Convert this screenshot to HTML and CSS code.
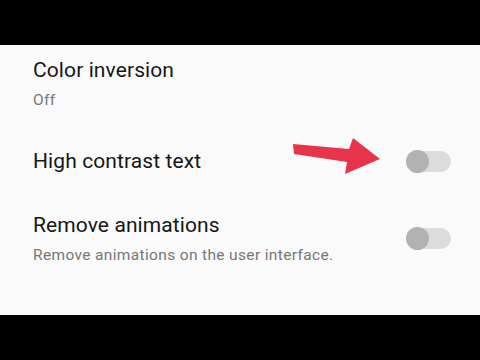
FILE: index.html
```
<!DOCTYPE html>
<html>
<head>
<meta charset="utf-8">
<link rel="stylesheet" href="styles.css">
</head>
<body>
<div class="frame">
  <div class="bar"></div>
  <div class="content">
    <div class="row">
      <div class="text">
        <div class="title">Color inversion</div>
        <div class="sub">Off</div>
      </div>
    </div>
    <div class="row">
      <div class="text">
        <div class="title">High contrast text</div>
      </div>
      <div class="toggle"><span class="knob"></span></div>
    </div>
    <div class="row">
      <div class="text">
        <div class="title">Remove animations</div>
        <div class="sub">Remove animations on the user interface.</div>
      </div>
      <div class="toggle"><span class="knob"></span></div>
    </div>
    <svg class="arrow" width="480" height="270" viewBox="0 45 480 270">
      <polygon points="293,144 349,149 353,138 380,159 345,174 347,162 294,154" fill="#e8344a"/>
    </svg>
  </div>
  <div class="bar"></div>
</div>
</body>
</html>
```
FILE: styles.css
```
html, body {
  margin: 0;
  padding: 0;
  background: #000;
}
.frame {
  width: 480px;
  height: 360px;
  display: flex;
  flex-direction: column;
  font-family: Roboto, "Liberation Sans", sans-serif;
}
.bar {
  height: 45px;
  background: #000;
  flex: none;
}
.content {
  position: relative;
  height: 270px;
  background: #fafafa;
  padding: 11px 29px 0 33px;
  box-sizing: border-box;
  display: flex;
  flex-direction: column;
  gap: 36px;
}
.row {
  display: flex;
  align-items: center;
  justify-content: space-between;
}
.text {
  display: flex;
  flex-direction: column;
  gap: 5px;
}
.title {
  font-size: 21px;
  line-height: 28px;
  letter-spacing: 0.1px;
  color: #161616;
}
.sub {
  font-size: 15.5px;
  line-height: 22px;
  letter-spacing: 0.35px;
  color: #777777;
}
.toggle {
  position: relative;
  width: 39px;
  height: 21px;
  margin-left: 6px;
  border-radius: 11px;
  background: #dcdcdc;
}
.knob {
  position: absolute;
  left: -6px;
  top: -1px;
  width: 23px;
  height: 23px;
  border-radius: 50%;
  background: #b2b2b2;
}
.arrow {
  position: absolute;
  left: 0;
  top: 0;
}
```
